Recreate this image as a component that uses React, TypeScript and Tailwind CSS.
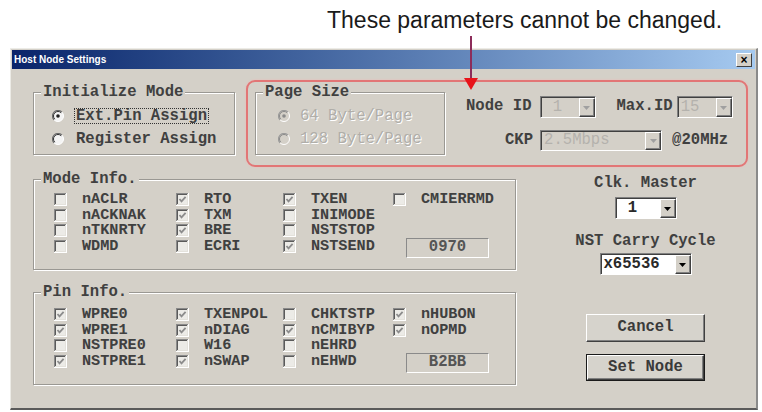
import React from "react";
import clsx from "clsx";

function Radio({ checked, disabled }: { checked?: boolean; disabled?: boolean }) {
  return (
    <svg width="12" height="12" viewBox="0 0 12 12" className="shrink-0">
      <circle cx="6" cy="6" r="5.5" fill={disabled ? "#d4d0c8" : "#f4f4f4"} />
      <path d="M9.9 2.1 A5.5 5.5 0 0 0 2.1 9.9" stroke={disabled ? "#9a9a9a" : "#6a6a6a"} strokeWidth="1.2" fill="none" />
      <path d="M2.1 9.9 A5.5 5.5 0 0 0 9.9 2.1" stroke="#ffffff" strokeWidth="1" fill="none" />
      <path d="M9.2 2.8 A4.5 4.5 0 0 0 2.8 9.2" stroke={disabled ? "#8a8a8a" : "#303030"} strokeWidth="1" fill="none" />
      {checked && <circle cx="6" cy="6" r="1.8" fill={disabled ? "#8a8a8a" : "#202020"} />}
    </svg>
  );
}

function Check({ checked }: { checked?: boolean }) {
  return (
    <svg width="13" height="13" viewBox="0 0 13 13" className="shrink-0">
      <rect x="0" y="0" width="13" height="13" fill="#ffffff" />
      <rect x="0" y="0" width="12" height="12" fill="#8a8a8a" />
      <rect x="1" y="1" width="11" height="11" fill="#e4e2dc" />
      <rect x="1" y="1" width="10" height="10" fill="#5a5a5a" />
      <rect x="2" y="2" width="9" height="9" fill="#ecebe7" />
      {checked && (
        <path d="M3.5 6 L5.5 8.3 L9.6 3.8" stroke="#8c8c8c" strokeWidth="1.8" fill="none" />
      )}
    </svg>
  );
}

function Group({
  legend,
  className,
  children,
}: {
  legend: string;
  className?: string;
  children?: React.ReactNode;
}) {
  return (
    <div
      className={clsx(
        "relative border border-[#9a9893] shadow-[inset_1px_1px_0_#ffffff,1px_1px_0_#ffffff]",
        className
      )}
    >
      <span className="absolute left-[7px] top-[-10px] px-[2px] bg-[#d4d0c8] leading-[18px] whitespace-pre">
        {legend}
      </span>
      {children}
    </div>
  );
}

function Combo({
  value,
  className,
  disabled,
}: {
  value: string;
  className?: string;
  disabled?: boolean;
}) {
  return (
    <div
      className={clsx(
        "flex border border-t-[#808080] border-l-[#808080] border-r-white border-b-white shadow-[inset_1px_1px_0_#404040]",
        disabled ? "bg-[#d4d0c8]" : "bg-white",
        className
      )}
    >
      <div
        className={clsx(
          "flex-1 flex items-center pl-[3px] pt-[1px] whitespace-pre",
          disabled ? "text-[#b4b2ad] font-normal" : "text-[#2a2a2a]"
        )}
      >
        {value}
      </div>
      <div className="w-[16px] mt-[1px] mb-0 flex items-center justify-center bg-[#d4d0c8] border border-t-white border-l-white border-r-[#404040] border-b-[#404040] shadow-[inset_-1px_-1px_0_#808080]">
        <svg width="7" height="4" viewBox="0 0 7 4">
          <polygon points="0,0 7,0 3.5,4" fill={disabled ? "#a0a0a0" : "#000000"} />
        </svg>
      </div>
    </div>
  );
}

function CheckRow({ label, checked }: { label?: string; checked?: boolean }) {
  if (!label) return <div className="h-[15.5px]" />;
  return (
    <div className="h-[15.5px] flex items-center">
      <Check checked={checked} />
      <span className="ml-[15px] text-[15.2px] leading-[15px] whitespace-pre">{label}</span>
    </div>
  );
}

function ValueBox({ value, className }: { value: string; className?: string }) {
  return (
    <div
      className={clsx(
        "w-[83px] h-[20px] flex items-center justify-center border border-t-[#8a8a8a] border-l-[#8a8a8a] border-r-white border-b-white text-[#555]",
        className
      )}
    >
      {value}
    </div>
  );
}

function Button({ label, isDefault }: { label: string; isDefault?: boolean }) {
  return (
    <div
      className={clsx(
        "w-[119px] flex",
        isDefault ? "h-[27px] border border-[#1a1a1a]" : "h-[28px]"
      )}
    >
      <div className="flex-1 flex items-center justify-center bg-[#d6d3cc] border border-t-white border-l-white border-r-[#404040] border-b-[#404040] shadow-[inset_-1px_-1px_0_#808080] text-[#3a3a3a]">
        {label}
      </div>
    </div>
  );
}

export default function App() {
  return (
    <div className="relative w-[762px] h-[412px] overflow-hidden bg-white font-['Liberation_Mono',monospace] text-[15.6px] font-bold text-[#404040]">
      <div className="h-[48px] pl-[327px] pt-[6px] font-['Liberation_Sans',Arial,sans-serif] font-normal text-[23px] leading-[28px] text-[#1a1a1a]">
        These parameters cannot be changed.
      </div>

      <svg
        className="absolute left-[463px] top-[36px]"
        width="16"
        height="56"
        viewBox="0 0 16 56"
      >
        <line x1="8" y1="0" x2="8" y2="44" stroke="#8c2c5a" strokeWidth="2" />
        <polygon points="1,42 15,42 8,54" fill="#e8131a" />
      </svg>

      <div className="ml-[10px] w-[748px] h-[362px] flex flex-col p-[1px] bg-[#d4d0c8] border border-[#ecebe6] border-r-2 border-b-2 border-r-[#8a8a8a] border-b-[#5a5a5a]">
        <div className="h-[19px] shrink-0 flex items-center justify-between pl-[2px] pr-[3px] bg-linear-to-r from-[#0a246a] to-[#a6caf0]">
          <span className="font-['Liberation_Sans',Arial,sans-serif] text-[10px] font-bold text-white leading-none">
            Host Node Settings
          </span>
          <div className="w-[16px] h-[14px] flex items-center justify-center bg-[#d4d0c8] border border-t-white border-l-white border-r-[#404040] border-b-[#404040] font-['Liberation_Sans',Arial,sans-serif] text-[12px] leading-none text-black">
            ×
          </div>
        </div>

        <div className="flex-1 flex flex-col pl-[21px] pt-[11px]">
          {/* Top row */}
          <div className="flex items-start h-[88px] shrink-0">
            <Group legend="Initialize Mode" className="mt-[12px] w-[202px] h-[63px]">
              <div className="flex flex-col pt-[11px] pl-[18px]">
                <div className="h-[23px] flex items-center">
                  <Radio checked />
                  <span className="ml-[10px] px-[1px] border border-dotted border-[#333] leading-[14px]">
                    Ext.Pin Assign
                  </span>
                </div>
                <div className="h-[23px] flex items-center">
                  <Radio />
                  <span className="ml-[12px] leading-[14px]">Register Assign</span>
                </div>
              </div>
            </Group>

            <div className="ml-[11px] w-[502px] h-[87px] rounded-[9px] border-2 border-[#e27676] shadow-[0_0_2px_#f3b5b5] flex items-start">
              <Group legend="Page Size" className="ml-[7px] mt-[10px] w-[190px] h-[63px] shrink-0">
                <div className="flex flex-col pt-[11px] pl-[22px] font-normal text-[#b0aea9] [text-shadow:1px_1px_0_#ffffff]">
                  <div className="h-[23px] flex items-center">
                    <Radio checked disabled />
                    <span className="ml-[10px] leading-[14px]">64 Byte/Page</span>
                  </div>
                  <div className="h-[23px] flex items-center">
                    <Radio disabled />
                    <span className="ml-[10px] leading-[14px]">128 Byte/Page</span>
                  </div>
                </div>
              </Group>

              <div className="flex flex-col">
                <div className="mt-[14px] h-[22px] flex items-center pl-[21px]">
                  <span>Node ID</span>
                  <Combo value=" 1" disabled className="ml-[8px] w-[56px] h-[22px]" />
                  <span className="ml-[21px]">Max.ID</span>
                  <Combo value="15" disabled className="ml-[4px] w-[56px] h-[22px]" />
                </div>
                <div className="mt-[12px] h-[21px] flex items-center pl-[60px]">
                  <span>CKP</span>
                  <Combo value="2.5Mbps" disabled className="ml-[7px] w-[122px] h-[21px]" />
                  <span className="ml-[10px]">@20MHz</span>
                </div>
              </div>
            </div>
          </div>

          {/* Lower section */}
          <div className="flex">
            <div className="w-[483px] shrink-0 flex flex-col">
              <Group legend="Mode Info." className="mt-[11px] h-[91px]">
                <div className="flex pt-[12px] pl-[20px]">
                  <div className="w-[122px] flex flex-col">
                    <CheckRow label="nACLR" />
                    <CheckRow label="nACKNAK" />
                    <CheckRow label="nTKNRTY" />
                    <CheckRow label="WDMD" />
                  </div>
                  <div className="w-[107px] flex flex-col">
                    <CheckRow label="RTO" checked />
                    <CheckRow label="TXM" checked />
                    <CheckRow label="BRE" checked />
                    <CheckRow label="ECRI" />
                  </div>
                  <div className="w-[110px] flex flex-col">
                    <CheckRow label="TXEN" checked />
                    <CheckRow label="INIMODE" />
                    <CheckRow label="NSTSTOP" />
                    <CheckRow label="NSTSEND" checked />
                  </div>
                  <div className="flex flex-col">
                    <CheckRow label="CMIERRMD" />
                    <ValueBox value="0970" className="mt-[30px] ml-[13px]" />
                  </div>
                </div>
              </Group>

              <Group legend="Pin Info." className="mt-[22px] h-[93px]">
                <div className="flex pt-[14px] pl-[20px]">
                  <div className="w-[122px] flex flex-col">
                    <CheckRow label="WPRE0" checked />
                    <CheckRow label="WPRE1" checked />
                    <CheckRow label="NSTPRE0" />
                    <CheckRow label="NSTPRE1" checked />
                  </div>
                  <div className="w-[107px] flex flex-col">
                    <CheckRow label="TXENPOL" checked />
                    <CheckRow label="nDIAG" checked />
                    <CheckRow label="W16" />
                    <CheckRow label="nSWAP" checked />
                  </div>
                  <div className="w-[110px] flex flex-col">
                    <CheckRow label="CHKTSTP" />
                    <CheckRow label="nCMIBYP" checked />
                    <CheckRow label="nEHRD" />
                    <CheckRow label="nEHWD" />
                  </div>
                  <div className="flex flex-col">
                    <CheckRow label="nHUBON" checked />
                    <CheckRow label="nOPMD" checked />
                    <ValueBox value="B2BB" className="mt-[15px] ml-[13px]" />
                  </div>
                </div>
              </Group>
            </div>

            <div className="ml-[20px] w-[220px] flex flex-col items-center">
              <div className="mt-[7px] h-[16px] leading-[16px]">Clk. Master</div>
              <Combo value=" 1" className="mt-[6px] w-[62px] h-[22px]" />
              <div className="mt-[14px] h-[16px] leading-[16px]">NST Carry Cycle</div>
              <Combo value="x65536" className="mt-[4px] w-[92px] h-[22px]" />
              <div className="mt-[39px]">
                <Button label="Cancel" />
              </div>
              <div className="mt-[12px]">
                <Button label="Set Node" isDefault />
              </div>
            </div>
          </div>
        </div>
      </div>
    </div>
  );
}
